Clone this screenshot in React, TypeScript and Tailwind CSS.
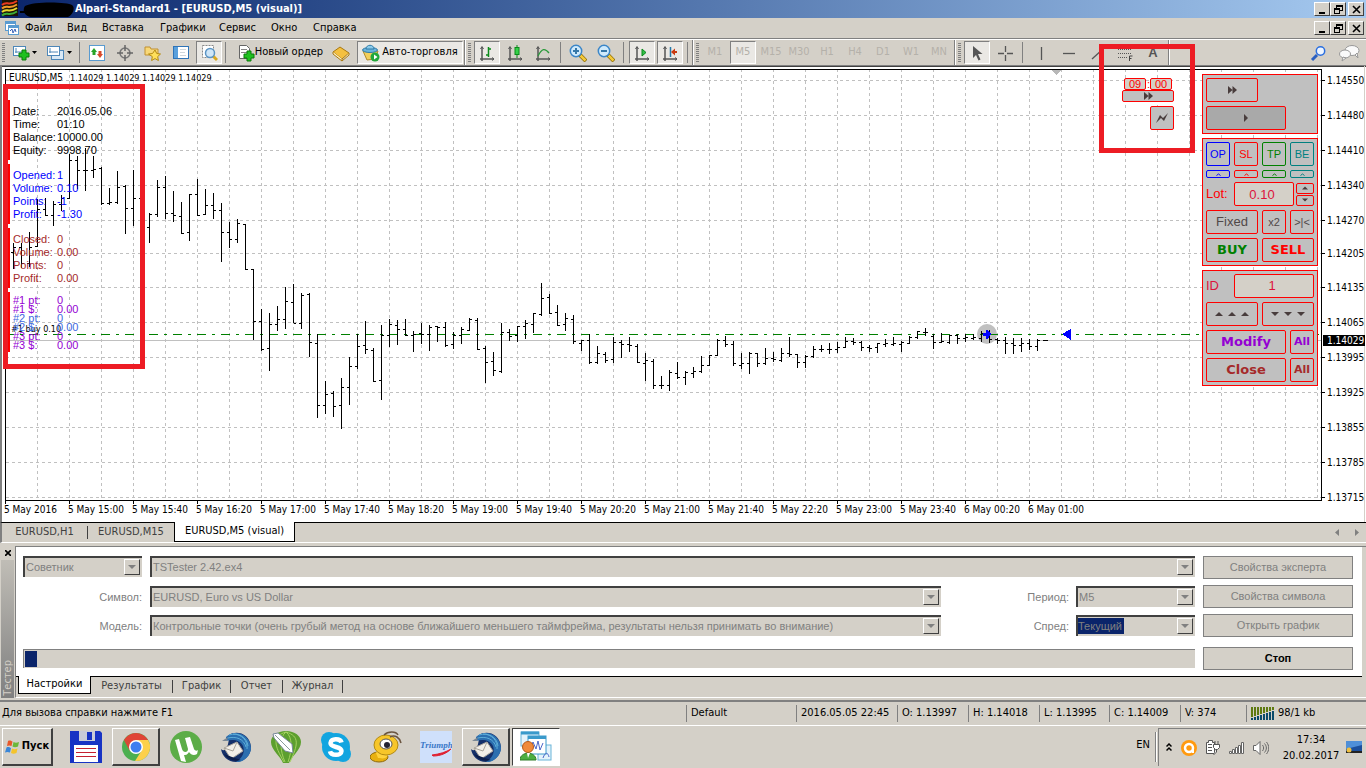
import React from "react";

const UI = "font-['DejaVu_Sans_Condensed','DejaVu_Sans',sans-serif]";
const WIDE = "font-['DejaVu_Sans',sans-serif]";
const ARIAL = "font-['Liberation_Sans',Arial,sans-serif]";

/* ---------- chart data: [high, low, open, close], one bar every 8 px ---------- */
const BARS: number[][] = [
  [243, 269, 252, 247], [243, 268, 247, 263], [232, 267, 263, 247], [199, 247, 246, 209],
  [198, 216, 209, 215], [201, 226, 215, 204], [195, 211, 204, 198], [154, 199, 198, 160],
  [156, 189, 160, 170], [148, 191, 170, 170], [156, 178, 170, 169], [167, 205, 168, 203],
  [188, 205, 203, 202], [171, 204, 202, 187], [185, 234, 186, 208], [170, 226, 208, 198],
  [193, 230, 198, 227], [213, 243, 227, 214], [180, 217, 214, 187], [176, 219, 187, 213],
  [191, 222, 213, 215], [202, 234, 216, 233], [194, 241, 232, 194], [179, 216, 194, 215],
  [189, 215, 214, 205], [193, 219, 205, 210], [203, 262, 210, 232], [222, 248, 232, 239],
  [219, 243, 239, 223], [224, 270, 224, 269],
  [269, 340, 269, 321], [309, 351, 321, 349], [313, 371, 348, 324], [306, 331, 324, 319],
  [287, 329, 319, 301], [284, 323, 302, 323], [293, 329, 323, 295], [293, 357, 294, 342],
  [334, 418, 343, 405], [381, 414, 405, 394], [391, 417, 393, 406], [378, 429, 405, 387],
  [357, 405, 387, 366], [334, 369, 366, 346], [321, 354, 345, 349], [348, 382, 350, 381],
  [325, 400, 380, 335], [319, 347, 335, 324], [320, 345, 325, 329], [319, 336, 329, 335],
  [331, 352, 335, 334], [323, 344, 333, 334], [325, 351, 334, 327], [326, 342, 326, 327],
  [322, 347, 327, 345], [332, 349, 344, 335], [327, 344, 335, 329], [318, 331, 330, 319],
  [318, 350, 320, 349], [346, 383, 348, 362], [352, 376, 361, 370], [323, 373, 371, 332],
  [329, 341, 332, 336], [326, 342, 335, 326], [320, 339, 326, 323], [313, 333, 324, 313],
  [283, 316, 314, 298], [294, 314, 297, 313], [305, 326, 312, 325], [313, 331, 324, 318],
  [315, 344, 319, 341], [340, 351, 343, 340], [334, 364, 340, 362], [346, 364, 362, 353],
  [352, 363, 354, 360], [337, 363, 359, 342], [340, 358, 342, 344], [337, 352, 344, 345],
  [344, 363, 346, 362], [353, 381, 363, 360], [359, 389, 361, 385], [376, 389, 385, 385],
  [370, 391, 385, 372], [362, 379, 373, 377], [371, 385, 377, 372], [367, 378, 373, 371],
  [356, 373, 371, 365], [355, 366, 365, 355], [339, 356, 355, 340], [336, 347, 340, 344],
  [341, 366, 344, 363], [353, 369, 365, 363], [352, 374, 363, 353], [353, 367, 353, 363],
  [348, 365, 363, 358], [352, 362, 358, 359], [348, 362, 360, 353], [337, 357, 353, 354],
  [354, 368, 354, 362], [355, 368, 362, 356], [346, 358, 356, 349], [345, 352, 349, 349],
  [343, 354, 349, 349], [342, 353, 349, 347], [337, 348, 347, 341], [338, 345, 341, 342],
  [341, 351, 342, 347], [345, 352, 347, 348], [343, 353, 347, 343], [339, 347, 344, 343],
  [337, 346, 344, 343], [341, 352, 344, 342], [336, 344, 343, 337], [331, 339, 337, 331],
  [328, 336, 332, 332], [334, 349, 336, 342], [333, 343, 342, 341], [335, 344, 342, 335],
  [334, 344, 335, 338], [334, 342, 338, 337], [334, 340, 338, 337], [331, 342, 338, 333],
  [330, 343, 333, 339], [338, 344, 339, 340], [337, 354, 340, 343], [338, 354, 343, 345],
  [338, 352, 345, 343], [339, 350, 343, 346], [339, 351, 346, 340],
];

const PRICES: [number, string][] = [
  [80, "1.14550"], [115, "1.14480"], [150, "1.14410"], [185, "1.14340"], [220, "1.14270"],
  [253, "1.14205"], [287, "1.14135"], [322, "1.14065"], [357, "1.13995"], [392, "1.13925"],
  [427, "1.13855"], [462, "1.13785"], [497, "1.13715"],
];

const TIMES = [
  "5 May 2016", "5 May 15:00", "5 May 15:40", "5 May 16:20", "5 May 17:00", "5 May 17:40",
  "5 May 18:20", "5 May 19:00", "5 May 19:40", "5 May 20:20", "5 May 21:00", "5 May 21:40",
  "5 May 22:20", "5 May 23:00", "5 May 23:40", "6 May 00:20", "6 May 01:00",
];

function Chart() {
  const bars = BARS.map(([h, l, o, c], i) => {
    const x = 13 + i * 8;
    return `M${x} ${h}h1V${l}h-1zM${x - 2} ${o}h2v1h-2zM${x + 1} ${c}h2v1h-2z`;
  }).join("");
  return (
    <svg className="block h-[456px] min-w-0 flex-1 bg-white" role="img" aria-label="EURUSD M5" shapeRendering="crispEdges">
      <g transform="translate(0 -66)">
        <g fill="#404040"><rect x="0" y="66" width="100%" height="1" /><rect x="0" y="66" width="2" height="456" fill="#808080" /></g>
        <g stroke="#c0c0c0" strokeDasharray="3 3">
          {Array.from({ length: 41 }, (_, i) => (
            <line key={i} x1={37.5 + i * 32} x2={37.5 + i * 32} y1="69" y2="500" />
          ))}
          {PRICES.map(([y]) => <line key={y} x1="6" x2="1321" y1={y + 0.5} y2={y + 0.5} />)}
        </g>
        <line x1="6" x2="1321" y1="340.5" y2="340.5" stroke="#c0c0c0" />
        <circle cx="987" cy="334" r="10" fill="#c0c0c0" shapeRendering="auto" />
        <line x1="5" x2="1321" y1="334.5" y2="334.5" stroke="#008000" strokeDasharray="9 6 3 6" />
        <path d={bars} fill="#000" />
        <path d="M1043 340h5v1h-5z" />
        <path d="M983 333h3v-3h2l3 4-3 5h-2v-3h-3z" fill="#00f" />
        <path d="M1062 334l9-5v11z" fill="#00f" />
        <path d="M1051 70h10l-5 5z" fill="#b8b8b8" />
        <path d="M5 69h1317v1H5zM5 69h1v432H5zM5 500h1317v1H5zM1321 69h1v432h-1z" />
        {TIMES.map((t, i) => <rect key={t} x={5 + i * 64} y="501" width="1" height="3" />)}
        <g className={`${UI} text-[10px]`} shapeRendering="auto">
          {TIMES.map((t, i) => <text key={t} x={4 + i * 64} y="513">{t}</text>)}
          <text x="9" y="81">EURUSD,M5</text>
          <text x="70" y="81" className="text-[9px]">1.14029 1.14029 1.14029 1.14029</text>
          <text x="11" y="332" className="text-[9px]">#1 buy 0.10</text>
        </g>
      </g>
    </svg>
  );
}

function PriceAxis() {
  return (
    <svg className="block h-[456px] w-11 shrink-0 bg-white" role="img" aria-label="Цена">
      <g transform="translate(0 -66)" className={`${UI} text-[10px]`}>
        <rect width="44" height="1" y="66" fill="#404040" />
        <rect x="42" y="66" width="1" height="456" fill="#d4d0c8" />
        {PRICES.map(([y, t]) => (
          <g key={t}><rect y={y} width="3" height="1" /><text x="5" y={y + 4}>{t}</text></g>
        ))}
        <rect x="1" y="335" width="42" height="11" />
        <text x="5" y="344" fill="#fff">1.14029</text>
      </g>
    </svg>
  );
}

/* ---------- statistics overlay ---------- */
function Stats() {
  const groups: { color: string; rows: string[][] }[] = [
    { color: "text-black", rows: [["Date:", "2016.05.06"], ["Time:", "01:10"], ["Balance:", "10000.00"], ["Equity:", "9998.70"]] },
    { color: "text-[#0000ff]", rows: [["Opened:", "1"], ["Volume:", "0.10"], ["Points:", "-1"], ["Profit:", "-1.30"]] },
    { color: "text-[#a52a2a]", rows: [["Closed:", "0"], ["Volume:", "0.00"], ["Points:", "0"], ["Profit:", "0.00"]] },
  ];
  return (
    <div className={`absolute left-[3px] top-[18px] flex h-[285px] w-[142px] flex-col gap-1 border-[5px] border-[#ed1c24] pt-[11px] text-[11px] ${ARIAL}`}>
      {groups.map((g, i) => (
        <dl key={i} className={`grid h-[60px] grid-cols-[44px_auto] content-start border-l-2 border-[#ff0000] pl-[3px] pt-[5px] leading-[13px] ${g.color}`}>
          {g.rows.map(([a, b]) => <React.Fragment key={a}><dt>{a}</dt><dd>{b}</dd></React.Fragment>)}
        </dl>
      ))}
      <dl className="grid h-[60px] grid-cols-[44px_auto] content-start border-l-2 border-[#ff0000] pl-[3px] pt-1 leading-[9px] text-[#9400d3]">
        <dt>#1 pt:</dt><dd>0</dd>
        <dt>#1 $:</dt><dd>0.00</dd>
        <dt className="text-[#4169e1]">#2 pt:</dt><dd className="text-[#4169e1]">0</dd>
        <dt className="text-[#4169e1]">#2 $:</dt><dd className="text-[#4169e1]">0.00</dd>
        <dt>#3 pt:</dt><dd>0</dd>
        <dt>#3 $:</dt><dd>0.00</dd>
      </dl>
    </div>
  );
}

/* ---------- trade panel ---------- */
type BtnProps = { className?: string; label?: string; children?: React.ReactNode };
function TB({ className = "", label, children }: BtnProps) {
  return (
    <button aria-label={label} className={`flex items-center justify-center rounded-[2px] border ${className}`}>
      {children}
    </button>
  );
}
const RED = "border-[#ff0000]";
const box = "grid grid-cols-[repeat(4,24px)] gap-1 border border-[#ff0000] bg-[#c0c0c0] p-[3px]";
const Caret = () => <svg width="5" height="3" viewBox="0 0 5 3" fill="none" stroke="currentColor"><path d="M0.5 2.5 2.5 1 4.500 2.500" /></svg>;
const Up = ({ s = 8 }: { s?: number }) => <svg width={s} height="4" viewBox="0 0 8 4" fill="#483c3c"><path d="M4 0l4 4H0z" /></svg>;
const Down = ({ s = 8 }: { s?: number }) => <svg width={s} height="4" viewBox="0 0 8 4" fill="#483c3c"><path d="M0 0h8L4 4z" /></svg>;
const Fwd = () => <svg width="9" height="8" viewBox="0 0 9 8" fill="#483c3c"><path d="M0 0l4.500 4L0 8zM4.500 0L9 4 4.500 8z" /></svg>;

function TradePanel() {
  return (
    <div className={`absolute right-12 top-2 flex flex-col gap-1 ${ARIAL}`}>
      <div className={`${box} grid-rows-[24px_24px]`}>
        <TB className={`col-span-2 ${RED}`} label="Быстрее"><Fwd /></TB>
        <TB className={`col-start-1 col-span-3 bg-[#a9a9a9] ${RED}`} label="Пуск теста">
          <svg width="4" height="8" viewBox="0 0 4 8" fill="#483c3c"><path d="M0 0l4 4-4 4z" /></svg>
        </TB>
      </div>
      <div className={`${box} grid-rows-[24px_8px_24px_24px_24px] text-[11px]`}>
        <TB className="border-[#0000ff] text-[#0000ff]">OP</TB>
        <TB className="border-[#ff0000] text-[#ff0000]">SL</TB>
        <TB className="border-[#008000] text-[#008000]">TP</TB>
        <TB className="border-[#008080] text-[#008080]">BE</TB>
        <TB className="border-[#0000ff] text-[#0000ff]" label="OP вверх"><Caret /></TB>
        <TB className="border-[#ff0000] text-[#ff0000]" label="SL вверх"><Caret /></TB>
        <TB className="border-[#008000] text-[#008000]" label="TP вверх"><Caret /></TB>
        <TB className="border-[#008080] text-[#008080]" label="BE вверх"><Caret /></TB>
        <div className="col-span-4 flex items-center">
          <label htmlFor="lot" className="w-7 text-[13px] text-[#ff0000]">Lot:</label>
          <input id="lot" defaultValue="0.10" className="h-6 w-[60px] rounded-[2px] border border-[#ff0000] bg-[#d4d0c8] pr-1 text-center text-[13px] text-[#dc143c]" />
          <div className="ml-0.5 flex flex-col gap-px">
            <TB className={`h-[11px] w-[18px] ${RED}`} label="Больше"><Up s={6} /></TB>
            <TB className={`h-[11px] w-[18px] ${RED}`} label="Меньше"><Down s={6} /></TB>
          </div>
        </div>
        <TB className={`col-span-2 text-[13px] text-[#504848] ${RED}`}>Fixed</TB>
        <TB className={`text-[#504848] ${RED}`}>x2</TB>
        <TB className={`text-[#504848] ${RED}`}>&gt;|&lt;</TB>
        <TB className={`col-span-2 text-[13px] font-bold text-[#008000] ${WIDE} ${RED}`}>BUY</TB>
        <TB className={`col-span-2 text-[13px] font-bold text-[#ff0000] ${WIDE} ${RED}`}>SELL</TB>
      </div>
      <div className={`${box} grid-rows-[24px_24px_24px_24px] text-[13px]`}>
        <label htmlFor="oid" className="self-center text-[#dc143c]">ID</label>
        <input id="oid" defaultValue="1" className="col-span-3 rounded-[2px] border border-[#ff0000] bg-[#d4d0c8] pr-1 text-center text-[13px] text-[#dc143c]" />
        <TB className={`col-span-2 gap-[5px] ${RED}`} label="Вверх"><Up /><Up /><Up /></TB>
        <TB className={`col-span-2 gap-[5px] ${RED}`} label="Вниз"><Down /><Down /><Down /></TB>
        <TB className={`col-span-3 font-bold text-[#9400d3] ${WIDE} ${RED}`}>Modify</TB>
        <TB className={`text-[11px] font-bold text-[#9400d3] ${WIDE} ${RED}`}>All</TB>
        <TB className={`col-span-3 font-bold text-[#a52a2a] ${WIDE} ${RED}`}>Close</TB>
        <TB className={`text-[11px] font-bold text-[#a52a2a] ${WIDE} ${RED}`}>All</TB>
      </div>
    </div>
  );
}

function TimeSkip() {
  return (
    <div className={`absolute right-[171px] top-[44px] flex h-[109px] w-24 flex-col items-end border-[5px] border-[#ed1c24] pr-4 pt-[29px] ${ARIAL}`}>
      <div className="flex h-3 items-center gap-px pr-0.5 text-[11px] text-[#ff0000]">
        <input aria-label="Часы" defaultValue="09" className="h-3 w-[22px] rounded-[2px] border border-[#ff0000] bg-[#d4d0c8] text-center leading-none" />
        <span className="w-0.5 leading-none">:</span>
        <input aria-label="Минуты" defaultValue="00" className="h-3 w-[22px] rounded-[2px] border border-[#ff0000] bg-[#d4d0c8] text-center leading-none" />
      </div>
      <TB className={`h-3 w-[52px] bg-[#c0c0c0] ${RED}`} label="Перемотать"><Fwd /></TB>
      <TB className={`mt-1 h-6 w-6 bg-[#c0c0c0] ${RED}`} label="Мгновенно">
        <svg width="12" height="10" viewBox="0 0 12 10" fill="#483c3c"><path d="M0 10 4 2l3 3 5-5-4 8-3-3z" /></svg>
      </TB>
    </div>
  );
}

/* ---------- title and menu ---------- */
function WinButtons() {
  const b = "flex h-[14px] w-4 items-center justify-center border border-b-[#404040] border-l-white border-r-[#404040] border-t-white bg-[#d4d0c8]";
  return (
    <div className="ml-auto flex pr-0.5">
      <button aria-label="Свернуть" className={b}><svg width="9" height="9"><path d="M1 7h6v2H1z" /></svg></button>
      <button aria-label="Восстановить" className={b}>
        <svg width="9" height="9" fill="none" stroke="#000" shapeRendering="crispEdges"><path d="M2.500 3V.5h6v5H6M2 1.500h7M.5 3.500h5v5h-5zM0 4.500h6" /></svg>
      </button>
      <button aria-label="Закрыть" className={`ml-0.5 ${b}`}>
        <svg width="9" height="9" stroke="#000" strokeWidth="1.600"><path d="M1 1l7 7M8 1L1 8" /></svg>
      </button>
    </div>
  );
}

/* ---------- toolbar ---------- */
const Grip = () => (
  <svg width="4" height="20" className="mx-0.5 shrink-0" shapeRendering="crispEdges">
    {Array.from({ length: 10 }, (_, i) => <rect key={i} y={i * 2} width="3" height="1" fill="#808080" />)}
  </svg>
);
const Sep = ({ className = "" }: { className?: string }) => <span className={`h-[21px] w-px shrink-0 bg-[#808080] ${className}`} />;
const TabSep = () => <span className="mt-[3px] h-[13px] w-px shrink-0 bg-[#404040]" />;
const Edge = () => <span className="block h-[25px] w-0.5 shrink-0 border-l border-r border-l-[#808080] border-r-white" />;
function Tool({ label, pressed, className = "w-[26px]", children }: { label: string; pressed?: boolean; className?: string; children: React.ReactNode }) {
  const p = pressed ? "border-b-white border-l-[#808080] border-r-white border-t-[#808080] bg-[#eae8e4]" : "border-transparent";
  return <button aria-label={label} aria-pressed={!!pressed} className={`flex h-[23px] shrink-0 items-center justify-center whitespace-nowrap border ${p} ${className}`}>{children}</button>;
}
const Ic = ({ children, w = 18 }: { children: React.ReactNode; w?: number }) => (
  <svg width={w} height="18" viewBox={`0 0 ${w} 18`} fill="none" className="shrink-0">{children}</svg>
);
const Axes = () => <g stroke="#555" strokeWidth="1.500"><path d="M4 3v14M2 15h14" /><path d="M2.500 5 4 2.500 5.500 5M14 13.500l2 1.500-2 1.500" strokeWidth="1" /></g>;
const Plus = ({ x, y }: { x: number; y: number }) => (
  <path transform={`translate(${x} ${y})`} d="M3 0h4v3h3v4H7v3H3V7H0V3h3z" fill="#1fc01f" stroke="#0a7a0a" />
);
const Drop = () => <svg width="5" height="3" className="shrink-0"><path d="M0 0h5L2.500 3z" /></svg>;
const Mag = ({ minus }: { minus?: boolean }) => (
  <Ic>
    <path d="M11 11l6 6" stroke="#8a6a00" strokeWidth="4" /><path d="M11.500 11.500l5 5" stroke="#f4c93a" strokeWidth="2.500" />
    <circle cx="7" cy="7" r="5.700" fill="#cfeafc" stroke="#3b86c8" strokeWidth="1.500" />
    <path d={minus ? "M4 7h6" : "M4 7h6M7 4v6"} stroke="#3577a8" strokeWidth="2" />
  </Ic>
);

function Toolbar() {
  return (
    <div className="flex h-[26px] items-center overflow-hidden border-t border-white text-[11px]">
      <Grip />
      <Tool label="Новый график" className="w-8 gap-0.5">
        <Ic><rect x="1.500" y="2.500" width="12" height="9" fill="#fff" stroke="#4e87b8" /><path d="M4 4v5M3 8h8" stroke="#4e87b8" /><Plus x={7} y={6} /></Ic><Drop />
      </Tool>
      <Tool label="Профили" className="ml-[3px] w-8 gap-px">
        <Ic w={20}><rect x="5.500" y="6.500" width="12" height="9" fill="#d9e9f6" stroke="#4e87b8" /><rect x="1.500" y="2.500" width="12" height="9" fill="#fff" stroke="#4e87b8" /><path d="M4 4v5M3 8h9" stroke="#4e87b8" /></Ic><Drop />
      </Tool>
      <Sep className="mx-1" />
      <Tool label="Обзор рынка"><Ic><rect x="1.500" y="1.500" width="15" height="15" fill="#fff" stroke="#5a9bd0" /><path d="M6 4l3 4H7.500v3h-3V8H3z" fill="#28a428" /><path d="M12 14l-3-4h1.500V7h3v3H15z" fill="#d8492a" /></Ic></Tool>
      <Tool label="Навигатор" className="ml-0.5 w-[26px]"><Ic><circle cx="9" cy="9" r="5" stroke="#777" strokeWidth="1.500" /><path d="M9 1v6M9 11v6M1 9h6M11 9h6" stroke="#666" strokeWidth="1.500" /></Ic></Tool>
      <Tool label="Избранное" className="ml-0.5 w-[26px]"><Ic><path d="M1 3h5l1 2h7v6H1z" fill="#f8d878" stroke="#c09030" /><path d="M11 6l1.700 3.500 3.800.5-2.800 2.600.7 3.900-3.400-1.900-3.400 1.900.7-3.900L4.500 10l4-.5z" fill="#ffdf5a" stroke="#b58a10" /></Ic></Tool>
      <Tool label="Терминал" className="ml-0.5 w-[26px]"><Ic><rect x="1.500" y="2.500" width="15" height="12" fill="#fff" stroke="#2f74b8" /><path d="M2 3h4v11H2z" fill="#5aa0dc" /><path d="M8 5.500h6M8 8.500h5M8 11.500h6" stroke="#cfd6dc" /></Ic></Tool>
      <Tool label="Тестер стратегий" pressed className="ml-0.5 w-[26px]"><Ic><path d="M2.500 1.500h11v12h-11z" fill="#fff" stroke="#888" strokeDasharray="2 1" /><path d="M13 12l4 4" stroke="#d8a820" strokeWidth="3" /><circle cx="10" cy="9" r="4.500" fill="#cfe6f8" stroke="#5a94c4" strokeWidth="1.500" /></Ic></Tool>
      <Sep className="mx-[3px]" />
      <Tool label="Новый ордер" className="ml-1 w-[94px]"><Ic><path d="M2.500 1.500h7l3 3v10h-10z" fill="#fff" stroke="#666" /><path d="M4 5.500h6M4 8.500h6" stroke="#888" /><Plus x={7} y={7} /></Ic>Новый ордер</Tool>
      <Tool label="MetaEditor" className="ml-px w-[26px]"><Ic><path d="M1 8l7-5 9 6-7 6z" fill="#f4c040" stroke="#a87810" /><path d="M1 8v2l9 7v-2M10 17l7-6V9" fill="#fff0c0" stroke="#a87810" /></Ic></Tool>
      <Tool label="Авто-торговля" pressed className="ml-[3px] w-[106px] gap-0.5"><Ic><path d="M1 7h15l-3 8-8 1z" fill="#f2cf5c" stroke="#b08a28" /><ellipse cx="8" cy="6" rx="7.500" ry="2.500" fill="#6ab4dc" stroke="#2f7ba8" /><path d="M4 5c0-5 8-5 8 0z" fill="#8ccbea" stroke="#2f7ba8" /><circle cx="13" cy="13" r="4.500" fill="#22a83a" /><path d="M12 10.500l3.500 2.500-3.500 2.500z" fill="#fff" /></Ic>Авто-торговля</Tool>
      <span className="ml-px"><Edge /></span>
      <Grip />
      <Tool label="Бары" pressed className="w-[26px]"><Ic><Axes /><path d="M10.500 3v10M8 11h2.500M10.500 5H13" stroke="#0a8a1a" strokeWidth="1.500" /></Ic></Tool>
      <Tool label="Свечи" className="ml-0.5 w-[26px]"><Ic><Axes /><path d="M11 1v13" stroke="#0a8a1a" /><rect x="9" y="3.500" width="4" height="7" fill="#34d048" stroke="#0a8a1a" /></Ic></Tool>
      <Tool label="Линия" className="ml-0.5 w-[26px]"><Ic><Axes /><path d="M4 12c4-8 7-8 11-3" stroke="#2a9a3a" strokeWidth="1.300" /></Ic></Tool>
      <Sep className="mx-1" />
      <Tool label="Увеличить" className="w-[26px]"><Mag /></Tool>
      <Tool label="Уменьшить" className="ml-0.5 w-[26px]"><Mag minus /></Tool>
      <Sep className="ml-1 mr-[5px]" />
      <Tool label="Автопрокрутка" pressed><Ic><Axes /><path d="M9 5l4 3.500L9 12z" fill="#34c048" stroke="#0a8a1a" /></Ic></Tool>
      <Tool label="Сдвиг графика" pressed className="ml-0.5 w-[26px]"><Ic><Axes /><path d="M9.500 3v10" stroke="#2678a8" strokeWidth="1.500" /><path d="M16 8h-4" stroke="#c83a10" strokeWidth="2" /><path d="M10 8l4-3.500v7z" fill="#c83a10" /></Ic></Tool>
      <Sep className="mx-1" />
      <Edge />
      <Grip />
      <div className="flex gap-0.5 text-[#b4b1aa]">
        <Tool label="M1">M1</Tool><Tool label="M5" pressed>M5</Tool><Tool label="M15">M15</Tool><Tool label="M30">M30</Tool>
        <Tool label="H1">H1</Tool><Tool label="H4">H4</Tool><Tool label="D1">D1</Tool><Tool label="W1">W1</Tool><Tool label="MN">MN</Tool>
      </div>
      <span className="ml-0.5"><Edge /></span>
      <Grip />
      <Tool label="Курсор" pressed><Ic><path d="M5 2v12l3-3 2.500 5.500 2-1L10 10h4.500z" fill="#555" /></Ic></Tool>
      <Tool label="Перекрестие" className="ml-0.5 w-[26px]"><Ic><path d="M9.500 2v6M9.500 11v6M2 9.500h6M11 9.500h6" stroke="#555" strokeWidth="1.300" /></Ic></Tool>
      <Sep className="ml-1 mr-[5px]" />
      <Tool label="Вертикальная линия"><Ic><path d="M9.500 3v13" stroke="#555" strokeWidth="1.300" /></Ic></Tool>
      <Tool label="Горизонтальная линия" className="ml-0.5 w-[26px]"><Ic><path d="M3 9.500h12" stroke="#555" strokeWidth="1.300" /></Ic></Tool>
      <Tool label="Трендовая линия" className="ml-0.5 w-[26px]"><Ic><path d="M4 15L15 5" stroke="#555" strokeWidth="1.300" /></Ic></Tool>
      <Tool label="Фибоначчи" className="ml-0.5 w-[26px]"><Ic><path d="M2 5.500h14M2 9.500h14M2 13.500h9" stroke="#555" strokeDasharray="1 1" /><path d="M13.500 17v-5h3M13.500 14.500h2" stroke="#444" /></Ic></Tool>
      <Tool label="Текст" className={`ml-0.5 w-[26px] text-[13px] font-bold text-[#555] ${ARIAL}`}>A</Tool>
      <span className="ml-0.5"><Edge /></span>
      <div className="ml-auto flex pr-1">
        <Tool label="Поиск"><Ic><path d="M7 11l-5 5" stroke="#2a5fc0" strokeWidth="3" /><circle cx="10.500" cy="7" r="4.200" fill="#eef5ff" stroke="#2a6fe0" strokeWidth="1.500" /></Ic></Tool>
        <Tool label="Сообщения" className="ml-1 w-[26px]"><Ic w={22}><ellipse cx="14" cy="6.500" rx="7" ry="5" fill="#fafafa" stroke="#999" /><ellipse cx="7" cy="10" rx="5.500" ry="4" fill="#fafafa" stroke="#999" /><path d="M5 13l-1 4 4-3zM17 11l3 3-1-5z" fill="#fafafa" stroke="#999" /></Ic></Tool>
      </div>
    </div>
  );
}

/* ---------- tester ---------- */
function Combo({ id, value, className, hl }: { id: string; value: string; className: string; hl?: boolean }) {
  return (
    <div className={`flex h-[21px] items-center justify-between border-l-2 border-t-2 border-l-[#404040] border-t-[#404040] bg-[#d4d0c8] pb-px pr-0.5 ${className}`}>
      <select id={id} disabled aria-label={value} className={`h-4 appearance-none truncate text-[#808080] opacity-100 ${hl ? "w-[46px] bg-[#0a246a]" : "min-w-0 flex-1 pl-px"}`}>
        <option>{value}</option>
      </select>
      <span className="flex h-4 w-4 shrink-0 items-center justify-center border border-b-[#404040] border-l-white border-r-[#404040] border-t-white">
        <svg width="8" height="4"><path d="M0 0h8L4 4z" fill="#808080" /></svg>
      </span>
    </div>
  );
}
const grayBtn = "h-[23px] border border-[#808080] bg-[#d4d0c8] text-[#808080]";

function Tester() {
  return (
    <section className="flex h-[153px] bg-[#d4d0c8] pt-px text-[11px]">
      <div className="flex w-[15px] shrink-0 flex-col items-center">
        <button aria-label="Закрыть тестер" className="flex h-[14px] items-center"><svg width="6" height="6" stroke="#000" strokeWidth="1.600"><path d="M0 0l6 6M6 0L0 6" /></svg></button>
        <div className="flex w-[13px] flex-1 items-center bg-linear-to-b from-[#c0bdb6] to-[#808080] pb-0.5 text-[#d4d0c8] [writing-mode:vertical-rl]">
          <span className="ml-auto mt-auto rotate-180 leading-[13px]">Тестер</span>
        </div>
      </div>
      <div className="flex min-w-0 flex-1 flex-col border-b border-l border-b-white border-l-[#808080] border-t border-t-[#808080] pr-1">
        <div className={`grid grid-cols-[119px_minmax(0,1fr)_150px] gap-x-2 gap-y-1.5 bg-white pb-1.5 pl-[7px] pr-[9px] pt-[9px] ${ARIAL}`}>
          <Combo id="kind" value="Советник" className="" />
          <Combo id="expert" value="TSTester 2.42.ex4" className="" />
          <button disabled className={grayBtn}>Свойства эксперта</button>
          <label htmlFor="symbol" className="self-center pt-px text-right text-[#808080]">Символ:</label>
          <div className="flex items-center">
            <Combo id="symbol" value="EURUSD, Euro vs US Dollar" className="flex-1" />
            <label htmlFor="period" className="w-[135px] pr-[7px] pt-px text-right text-[#808080]">Период:</label>
            <Combo id="period" value="M5" className="w-[119px]" />
          </div>
          <button disabled className={grayBtn}>Свойства символа</button>
          <label htmlFor="model" className="self-center pt-px text-right text-[#808080]">Модель:</label>
          <div className="flex items-center">
            <Combo id="model" value="Контрольные точки (очень грубый метод на основе ближайшего меньшего таймфрейма, результаты нельзя принимать во внимание)" className="flex-1" />
            <label htmlFor="spread" className="w-[135px] pr-[7px] pt-px text-right text-[#808080]">Спред:</label>
            <Combo id="spread" value="Текущий" hl className="w-[119px]" />
          </div>
          <button disabled className={grayBtn}>Открыть график</button>
          <div role="progressbar" aria-label="Прогресс" aria-valuenow={1} className="col-span-2 mt-1 h-[19px] self-center border-l border-t border-[#808080] bg-[#d4d0c8] p-px">
            <div className="h-4 w-3 bg-[#0a246a]" />
          </div>
          <button className="mt-1 h-[23px] border border-[#808080] bg-[#d4d0c8] text-[11px] font-bold">Стоп</button>
        </div>
        <nav className="flex flex-1 items-start border-t border-black pl-0.5 text-[#404040]">
          <button className="-mt-px h-[18px] w-[73px] border border-t-0 border-black bg-white text-black">Настройки</button>
          <button className="h-[19px] w-[81px]">Результаты</button><TabSep />
          <button className="h-[19px] w-[57px]">График</button><TabSep />
          <button className="h-[19px] w-[51px]">Отчет</button><TabSep />
          <button className="h-[19px] w-[59px]">Журнал</button><TabSep />
        </nav>
      </div>
    </section>
  );
}

/* ---------- task bar icons ---------- */
const I32 = ({ children }: { children: React.ReactNode }) => <svg width="32" height="32" viewBox="0 0 32 32" fill="none">{children}</svg>;
const Bird = () => (
  <I32>
    <path d="M9 4C16-1 30 2 31 16c0 9-8 15-15 15C8 31 2 25 1 18c4 4 8-2 8-14z" fill="#15306a" />
    <path d="M6 6C14-2 30 2 31 17c0 8-8 15-15 14 7-4 9-10 7-16-3-6-10-7-17-5z" fill="#2b6fb0" />
    <path d="M9 4c9-3 18 2 19 11M13 3c9 0 15 7 14 15M8 7c8-2 16 1 18 9" stroke="#5cadd8" />
    <path d="M4 17l13-6 6 9-12 8z" fill="#f2eee8" stroke="#a9a49a" /><path d="M4 17l9 3 4-9" stroke="#a9a49a" />
    <path d="M2 10l6-4-1 4z" fill="#7a8794" /><path d="M4 23c4 6 10 8 17 6l-9-3z" fill="#0c1d4a" />
  </I32>
);
const ICONS: { name: string; state?: string; icon: React.ReactNode }[] = [
  { name: "Total Commander", icon: <I32><path d="M0 0h30l2 2v30H0z" fill="#1733c4" /><rect x="9" width="16" height="10" fill="#c9ccd8" /><rect x="17" y="1" width="5" height="8" fill="#1733c4" /><rect x="4" y="14" width="24" height="17" fill="#fff" /><path d="M6 17.500h20M6 21.500h20M6 25.500h20" stroke="#c42030" /></I32> },
  { name: "Chrome", state: "up", icon: <I32><circle cx="16" cy="16" r="14" fill="#4caf50" /><path d="M16 16 3.900 9A14 14 0 0 1 28.100 9z" fill="#e04436" /><path d="M16 9h12.100A14 14 0 0 1 15 30l7-11z" fill="#fcd04b" /><path d="M3.900 9l6 11L16 16z" fill="#e04436" /><circle cx="16" cy="16" r="7" fill="#fff" /><circle cx="16" cy="16" r="5.500" fill="#3f7ef0" /></I32> },
  { name: "uTorrent", icon: <I32><circle cx="16" cy="16" r="16" fill="#5cad48" /><path d="M5 9l4-1 3 10c1 4 6 4 6 0L15 7l5-1 4 12c1 2 3 2 4 1l-1 4c-3 2-6 1-8-2-2 3-3 3-5 3l2 7-5-1z" fill="#fff" /></I32> },
  { name: "Thunderbird", icon: <Bird /> },
  { name: "CorelDRAW", icon: <I32><path d="M16 0C7 0 1 5 1 11c0 8 10 15 12 21h6c2-6 12-13 12-21C31 5 25 0 16 0z" fill="#5c9f2e" /><path d="M16 1C9 6 10 20 15 31M16 1c7 5 6 19 2 30M16 1C2 5 4 14 14 31M16 1c14 4 12 13 4 30" stroke="#a3d060" /><path d="M3 3l5-1 14 11 1 9-8-2L4 7z" fill="#fff" stroke="#789" /><path d="M5 4l15 15" stroke="#899" /></I32> },
  { name: "Skype", icon: <I32><circle cx="16" cy="16" r="14" fill="#12a5e0" /><circle cx="9" cy="9" r="8" fill="#12a5e0" /><circle cx="23" cy="23" r="8" fill="#12a5e0" /><path d="M21.500 11.500c-1-4.500-11-4.500-11 .5 0 5 11 3 11 8 0 5-10.500 5-11.500.2" stroke="#fff" strokeWidth="4.500" /></I32> },
  { name: "Пчела", icon: <I32><ellipse cx="9" cy="26" rx="9" ry="5" fill="#e8b010" stroke="#8f6a08" /><path d="M6 22c0-3 14-3 12 2s-8 3-10 3z" fill="#ffd23c" /><ellipse cx="16" cy="14" rx="12" ry="10" fill="#f7c62a" stroke="#b38a12" /><ellipse cx="16" cy="13" rx="6" ry="5" fill="#fff" stroke="#555" /><circle cx="17" cy="14" r="3" fill="#223" /><path d="M14 4c4-4 12-4 14 0M20 6c5-3 10 1 11 6" stroke="#6b5540" strokeWidth="1.500" /></I32> },
  { name: "Triumph", icon: <I32><rect width="32" height="32" fill="#cfe0fb" /><text x="0" y="17" fontSize="9" fontStyle="italic" fontWeight="bold" fontFamily="Liberation Serif, serif" fill="#3a78c8">Triumph</text><path d="M12 24c8-1 14-3 19-6-4 4-10 7-18 7z" fill="#e02030" stroke="#e02030" /></I32> },
  { name: "Thunderbird — почта", state: "up", icon: <Bird /> },
  { name: "MetaTrader", state: "down", icon: <I32><rect x="1" y="1" width="18" height="14" fill="#e4f3fb" stroke="#6ab4d8" /><rect x="18" y="14" width="13" height="15" fill="#e4f3fb" stroke="#6ab4d8" /><rect x="8" y="5" width="18" height="18" fill="#fff" stroke="#3a9acb" /><path d="M1 2h18M8 6.500h18" stroke="#3a9acb" strokeWidth="3" /><path d="M11 16l2-5 3 7 2-8 2 9 3-7M23 27c2-6 5-6 6-1" stroke="#4a66c8" /><circle cx="8" cy="16" r="5.500" fill="#f08a3a" stroke="#b55a18" /><path d="M0 29c0-9 16-9 16 0z" fill="#4caf40" stroke="#2f7d28" /><path d="M7 22l1 5 2-5z" fill="#fff" /></I32> },
];

export default function App() {
  return (
    <div className={`relative flex min-h-screen flex-col overflow-hidden bg-[#d4d0c8] text-black ${UI}`}>
      <header className="flex h-[18px] items-center bg-linear-to-r from-[#0a246a] to-[#a6caf0] text-[11px] font-bold text-white">
        <svg width="18" height="18" viewBox="0 0 18 18" fill="none" strokeWidth="2"><path d="M2 0h16v16H2z" fill="#1c1404" /><path d="M2 5c5-5 6 2 15-4" stroke="#e83a20" /><path d="M2 8.500c5-5 6 2 15-4" stroke="#f09a28" /><path d="M2 12c5-5 6 2 15-4" stroke="#e8d830" /><path d="M2 15.500c5-5 6 2 15-4" stroke="#3cae38" /></svg>
        <svg width="57" height="17" viewBox="0 0 57 17" className="mt-px"><path d="M2 10h5v2H2zM7 5C16 0 50 1 54 4s0 11-4 12H15C6 16 4 9 7 5z" /></svg>
        <h1 className="leading-[18px]">Alpari-Standard1 - [EURUSD,M5 (visual)]</h1>
        <WinButtons />
      </header>
      <nav className="flex h-[21px] items-center border-b border-[#808080] text-[11px]">
        <svg width="14" height="14" viewBox="0 0 14 14" className="ml-[5px]" fill="#fff" stroke="#5a9bd0"><rect x=".5" y=".5" width="10" height="9" /><rect x="3.500" y="4.500" width="10" height="9" /><path d="M1 2h9M4 6h9" strokeWidth="2" /><path d="M5 10l2-2 1 4 2-4 1 3" fill="none" stroke="#3a62b8" /></svg>
        <button className="ml-[6px] w-[27px] text-left">Файл</button>
        <button className="ml-[15px] w-[20px] text-left">Вид</button>
        <button className="ml-[15px] w-[43px] text-left">Вставка</button>
        <button className="ml-[15px] w-[44px] text-left">Графики</button>
        <button className="ml-[15px] w-[37px] text-left">Сервис</button>
        <button className="ml-[15px] w-[27px] text-left">Окно</button>
        <button className="ml-[15px] text-left">Справка</button>
        <WinButtons />
      </nav>
      <Toolbar />
      <span className="h-px bg-[#808080]" />

      <main className="relative flex">
        <Chart />
        <PriceAxis />
        <Stats />
        <TradePanel />
      </main>

      <nav className="flex h-[21px] items-start border-b border-l-2 border-t border-b-white border-l-[#808080] border-t-black text-[11px] text-[#404040]">
        <button className="h-[19px] w-[85px]">EURUSD,H1</button>
        <TabSep />
        <button className="h-[19px] w-[86px]">EURUSD,M15</button>
        <button className="-mt-px h-5 w-[121px] border border-t-0 border-black bg-white text-black">EURUSD,M5 (visual)</button>
        <svg width="24" height="7" className="ml-auto mr-[7px] mt-1.5" fill="#808080"><path d="M4 0v7L0 3.500zM20 0v7l4-3.500z" /></svg>
      </nav>
      <span className="h-0.5" />
      <Tester />

      <footer className="mt-0.5 flex h-[25px] items-center border-t-2 border-[#808080] text-[11px]">
        <span className="min-w-0 flex-1 truncate pl-0.5">Для вызова справки нажмите F1</span>
        <span className="w-[110px] border-l border-[#808080] pl-1">Default</span>
        <span className="w-[101px] border-l border-[#808080] pl-1">2016.05.05 22:45</span>
        <span className="w-[71px] border-l border-[#808080] pl-1">O: 1.13997</span>
        <span className="w-[71px] border-l border-[#808080] pl-1">H: 1.14018</span>
        <span className="w-[70px] border-l border-[#808080] pl-1">L: 1.13995</span>
        <span className="w-[71px] border-l border-[#808080] pl-1">C: 1.14009</span>
        <span className="w-[66px] border-l border-[#808080] pl-1">V: 374</span>
        <span className="flex w-[120px] items-center gap-1 border-l border-[#808080] pl-1">
          <svg width="23" height="13" shapeRendering="crispEdges">
            {Array.from({ length: 8 }, (_, i) => <g key={i}><rect x={i * 3} width="2" height={10 - i} fill="#5f7a10" /><rect x={i * 3} y={11 - i} width="2" height={2 + i} fill="#0a4a6a" /></g>)}
          </svg>
          98/1 kb
        </span>
      </footer>

      <div className="flex h-[43px] items-center border-t border-white pl-0.5">
        <button className="flex h-[38px] w-[51px] items-center justify-center gap-0.5 border border-b-2 border-r-2 border-b-[#404040] border-l-white border-r-[#404040] border-t-white text-[11px] font-bold">
          <svg width="15" height="14" viewBox="0 0 15 14"><path d="M3 1c2-1 3 0 4.500.5L6.500 6C5 5.500 4 5 2 6z" fill="#e8582a" /><path d="M8.500 2c2 1 3 1 5.500 0l-1 4.500c-2 1-4 1-5.500 0z" fill="#6cb83a" /><path d="M1.500 7.500c2-1 3 0 4.500.5L5 12.500c-1.500-.5-3-1-5 0z" fill="#3a86d8" /><path d="M7 8.500c2 1 3 1 5.500 0l-1 4.500c-2 1-4 1-5.500 0z" fill="#f4c42c" /></svg>
          Пуск
        </button>
        <div className="ml-[9px] flex gap-0.5">
          {ICONS.map((a) => (
            <button
              key={a.name}
              aria-label={a.name}
              className={`flex h-[38px] w-12 items-center justify-center border ${a.state === "up" ? "border-b-2 border-r-2 border-b-[#404040] border-l-white border-r-[#404040] border-t-white" : a.state === "down" ? "border-b-white border-l-[#404040] border-r-white border-t-[#404040] bg-white" : "border-transparent"}`}
            >
              {a.icon}
            </button>
          ))}
        </div>
        <span className="ml-auto pb-1 text-[11px]">EN</span>
        <span className="ml-[5px] h-[30px] w-0.5 border-l border-r border-l-[#808080] border-r-white" />
        <div className="ml-px flex h-[38px] w-52 items-center border-l border-t border-[#808080] pl-[7px]">
          <svg width="6" height="9" fill="none" stroke="#000" strokeWidth="1.500"><path d="M.5 3.500 3 1l2.500 2.500M.5 7.500 3 5l2.500 2.500" /></svg>
          <svg width="16" height="16" viewBox="0 0 16 16" className="ml-[9px]" fill="none"><circle cx="8" cy="8" r="8" fill="#ff9a10" /><circle cx="8" cy="8" r="4" stroke="#fff" strokeWidth="2.500" /><path d="M12 7v6" stroke="#fff" strokeWidth="2" /></svg>
          <svg width="16" height="16" viewBox="0 0 16 16" className="ml-2" fill="#fff" stroke="#555"><path d="M3.500.5h4v2h2v11h-8v-11h2z" /><path d="M3 4.500h4M3 7.500h4M3 10.500h4" /><path d="M8.500 4.500h6v3l-2 2h-2l-2-2zM10 4V1M13 4V1M11.500 9v3l-3 3" /></svg>
          <svg width="16" height="12" viewBox="0 0 16 12" className="ml-2" fill="#fff" stroke="#666"><path d="M.5 9.500h2v2h-2zM3.500 7.500h2v4h-2zM6.500 5.500h2v6h-2zM9.500 3.500h2v8h-2zM12.500.5h2v11h-2z" /></svg>
          <svg width="16" height="16" viewBox="0 0 16 16" className="ml-2" fill="#fff" stroke="#666"><path d="M.5 5.500H3l4-4v13l-4-4H.5z" /><path d="M9.500 5c1.500 2 1.500 4 0 6M11.500 3.500c2.500 3 2.500 6 0 9M13.500 2c3 4 3 8 0 12" fill="none" /></svg>
          <time className="ml-[13px] w-[58px] text-center text-[11px] leading-4">17:34<br />20.02.2017</time>
          <svg width="16" height="13" viewBox="0 0 16 13" className="ml-1.5"><rect width="16" height="10" fill="#1c4f9c" /><path d="M0 0h16v4L0 8z" fill="#4f8fd8" /><rect y="10" width="16" height="2" fill="#222" /><circle cx="3" cy="9" r="2.500" fill="#f0c040" /></svg>
        </div>
      </div>
      <TimeSkip />
    </div>
  );
}
